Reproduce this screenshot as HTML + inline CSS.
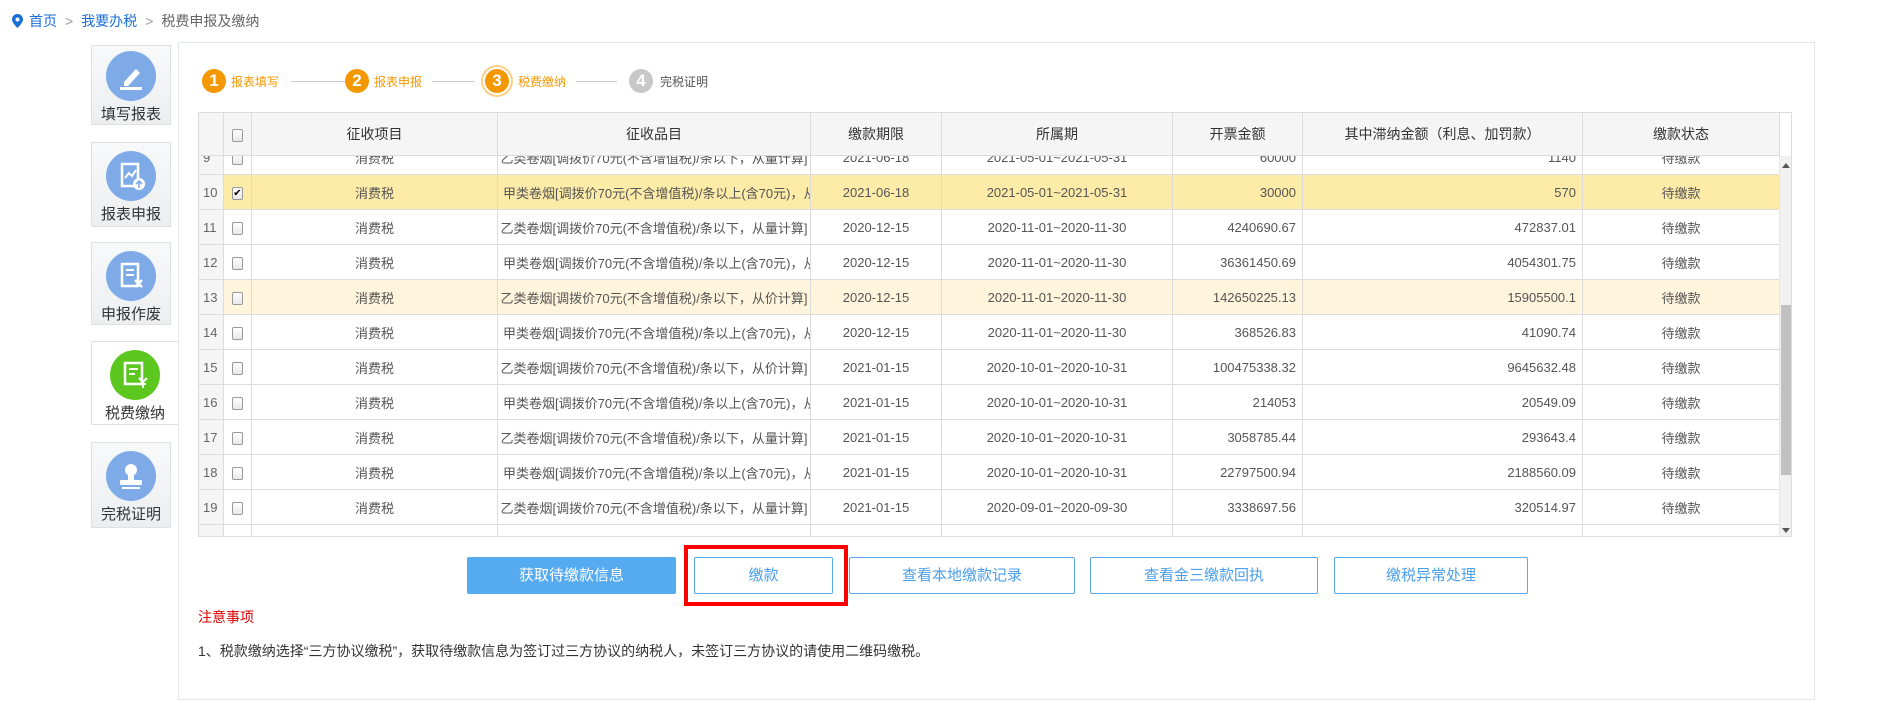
<!DOCTYPE html>
<html><head><meta charset="utf-8"><style>
*{margin:0;padding:0;box-sizing:border-box}
body{width:1904px;height:711px;background:#fff;font-family:"Liberation Sans","Noto Sans CJK SC",sans-serif;color:#333;position:relative;overflow:hidden;font-size:14px}
.abs{position:absolute}
.bc{left:12px;top:11px;font-size:14px;color:#666}
.bc a{color:#1a6fd8;text-decoration:none}
.bc span{color:#999;margin:0 8px}
.tile{position:absolute;left:91px;width:80px;background:linear-gradient(#f8f9fa,#eceef0);border:1px solid #dde1e5;text-align:center;font-size:15px;color:#333;line-height:20px}
.tile .c{width:50px;height:50px;border-radius:50%;background:#7eaae8;margin:8px auto 4px;position:relative}
.tile.act{background:#fff;width:87px;border-right:none}
.tile.act .c{background:#5cc81f}
.panel{left:178px;top:42px;width:1637px;height:658px;border:1px solid #e3e6ea}
.step{position:absolute;top:69px;width:24px;height:24px;border-radius:50%;background:#f39800;color:#fff;font-weight:bold;text-align:center;line-height:24px;font-size:17px}
.st{position:absolute;top:73px;font-size:12px;color:#f39800}
.ln{position:absolute;top:81px;height:1px;background:#ccc}
table{border-collapse:collapse;table-layout:fixed;font-size:13px}
td,th{border:1px solid #dcdcdc;text-align:center;white-space:nowrap;overflow:hidden;height:35px;color:#555;font-weight:normal}
th{background:#f5f5f5;height:43px;font-size:14px;color:#333}
td.r{text-align:right;padding-right:6px}
td.n{color:#666;text-align:left;padding-left:4px;background:#f5f5f5}
.cb{display:inline-block;width:11px;height:13px;border:1px solid #999;border-radius:2px;background:linear-gradient(#fff,#e8e8e8);vertical-align:middle;font-size:10px;line-height:11px;color:#000}
tr.y td{background:#fdeba8}
tr.y td.n{background:#f5f5f5}
tr.l td{background:#fff5dc}
tr.l td.n{background:#f5f5f5}
.btn{position:absolute;top:557px;height:37px;border:1px solid #5aa9ee;border-radius:2px;color:#4a9eea;text-align:center;line-height:35px;font-size:15px;background:#fff}
</style></head><body>
<div class="abs bc"><svg width="11" height="14" viewBox="0 0 11 14" style="vertical-align:-2px;margin-right:6px"><path d="M5.5 0C2.5 0 0 2.4 0 5.4 0 9 5.5 14 5.5 14S11 9 11 5.4C11 2.4 8.5 0 5.5 0zm0 7.5a2 2 0 110-4 2 2 0 010 4z" fill="#1a6fd8"/></svg><a>首页</a><span>&gt;</span><a>我要办税</a><span>&gt;</span>税费申报及缴纳</div>

<div class="tile" style="top:45px;height:80px"><div class="c" style="margin-top:5px"><svg width="50" height="50"><path d="M18 31l12-13 4 4-12 13h-4z" fill="#fff"/><rect x="14" y="36" width="22" height="3" fill="#fff"/></svg></div>填写报表</div>
<div class="tile" style="top:142px;height:85px"><div class="c"><svg width="50" height="50"><rect x="16" y="13" width="16" height="22" fill="none" stroke="#fff" stroke-width="2.5"/><path d="M19 27l4-5 3 3 4-6" stroke="#fff" stroke-width="2" fill="none"/><circle cx="33" cy="33" r="6" fill="#fff"/><path d="M33 37v-7m-3 3l3-3 3 3" stroke="#7eaae8" stroke-width="1.6" fill="none"/></svg></div>报表申报</div>
<div class="tile" style="top:242px;height:83px"><div class="c"><svg width="50" height="50"><rect x="16" y="13" width="16" height="22" fill="none" stroke="#fff" stroke-width="2.5"/><path d="M20 19h8M20 24h8" stroke="#fff" stroke-width="2"/><path d="M29 29l7 7m0-7l-7 7" stroke="#fff" stroke-width="2.5"/></svg></div>申报作废</div>
<div class="tile act" style="top:341px;height:84px"><div class="c"><svg width="50" height="50"><rect x="15" y="13" width="17" height="21" fill="none" stroke="#fff" stroke-width="2.5"/><path d="M19 19h9M19 24h6" stroke="#fff" stroke-width="2"/><path d="M29 28l4 4 4-4M33 32v6M30 34h6" stroke="#fff" stroke-width="2" fill="none"/></svg></div>税费缴纳</div>
<div class="tile" style="top:442px;height:86px"><div class="c"><svg width="50" height="50"><circle cx="25" cy="19" r="6" fill="#fff"/><rect x="22" y="23" width="6" height="6" fill="#fff"/><rect x="14" y="29" width="22" height="5" rx="1" fill="#fff"/><rect x="16" y="36" width="18" height="2" fill="#fff"/></svg></div>完税证明</div>

<div class="abs panel"></div>
<div class="step" style="left:202px">1</div><div class="st" style="left:231px">报表填写</div><div class="ln" style="left:291px;width:55px"></div>
<div class="step" style="left:345px">2</div><div class="st" style="left:374px">报表申报</div><div class="ln" style="left:432px;width:43px"></div>
<div class="step" style="left:485px;box-shadow:0 0 0 2px #fff,0 0 0 4px #fbd08a">3</div><div class="st" style="left:518px">税费缴纳</div><div class="ln" style="left:576px;width:41px"></div>
<div class="step" style="left:629px;background:#c8c8c8">4</div><div class="st" style="left:660px;color:#555">完税证明</div>

<div class="abs" style="left:198px;top:112px;width:1594px;height:425px;border:1px solid #dcdcdc;overflow:hidden">
<table style="width:1581px;position:absolute;top:-1px;left:-1px">
<colgroup><col style="width:25px"><col style="width:28px"><col style="width:246px"><col style="width:313px"><col style="width:131px"><col style="width:231px"><col style="width:130px"><col style="width:280px"><col style="width:197px"></colgroup>
<tr><th style="background:#f5f5f5"></th><th><span class="cb"></span></th><th>征收项目</th><th>征收品目</th><th>缴款期限</th><th>所属期</th><th>开票金额</th><th>其中滞纳金额（利息、加罚款）</th><th>缴款状态</th></tr>
</table>
<div style="position:absolute;top:43px;left:-1px;width:1581px;height:382px;overflow:hidden">
<table style="width:1581px;margin-top:-17px">
<colgroup><col style="width:25px"><col style="width:28px"><col style="width:246px"><col style="width:313px"><col style="width:131px"><col style="width:231px"><col style="width:130px"><col style="width:280px"><col style="width:197px"></colgroup>
<tr><td class="n">9</td><td><span class="cb"></span></td><td>消费税</td><td>乙类卷烟[调拨价70元(不含增值税)/条以下，从量计算]</td><td>2021-06-18</td><td>2021-05-01~2021-05-31</td><td class="r">60000</td><td class="r">1140</td><td>待缴款</td></tr>
<tr class="y"><td class="n">10</td><td><span class="cb">✔</span></td><td>消费税</td><td style="text-align:left;padding-left:5px">甲类卷烟[调拨价70元(不含增值税)/条以上(含70元)，从量</td><td>2021-06-18</td><td>2021-05-01~2021-05-31</td><td class="r">30000</td><td class="r">570</td><td>待缴款</td></tr>
<tr><td class="n">11</td><td><span class="cb"></span></td><td>消费税</td><td>乙类卷烟[调拨价70元(不含增值税)/条以下，从量计算]</td><td>2020-12-15</td><td>2020-11-01~2020-11-30</td><td class="r">4240690.67</td><td class="r">472837.01</td><td>待缴款</td></tr>
<tr><td class="n">12</td><td><span class="cb"></span></td><td>消费税</td><td style="text-align:left;padding-left:5px">甲类卷烟[调拨价70元(不含增值税)/条以上(含70元)，从价</td><td>2020-12-15</td><td>2020-11-01~2020-11-30</td><td class="r">36361450.69</td><td class="r">4054301.75</td><td>待缴款</td></tr>
<tr class="l"><td class="n">13</td><td><span class="cb"></span></td><td>消费税</td><td>乙类卷烟[调拨价70元(不含增值税)/条以下，从价计算]</td><td>2020-12-15</td><td>2020-11-01~2020-11-30</td><td class="r">142650225.13</td><td class="r">15905500.1</td><td>待缴款</td></tr>
<tr><td class="n">14</td><td><span class="cb"></span></td><td>消费税</td><td style="text-align:left;padding-left:5px">甲类卷烟[调拨价70元(不含增值税)/条以上(含70元)，从量</td><td>2020-12-15</td><td>2020-11-01~2020-11-30</td><td class="r">368526.83</td><td class="r">41090.74</td><td>待缴款</td></tr>
<tr><td class="n">15</td><td><span class="cb"></span></td><td>消费税</td><td>乙类卷烟[调拨价70元(不含增值税)/条以下，从价计算]</td><td>2021-01-15</td><td>2020-10-01~2020-10-31</td><td class="r">100475338.32</td><td class="r">9645632.48</td><td>待缴款</td></tr>
<tr><td class="n">16</td><td><span class="cb"></span></td><td>消费税</td><td style="text-align:left;padding-left:5px">甲类卷烟[调拨价70元(不含增值税)/条以上(含70元)，从量</td><td>2021-01-15</td><td>2020-10-01~2020-10-31</td><td class="r">214053</td><td class="r">20549.09</td><td>待缴款</td></tr>
<tr><td class="n">17</td><td><span class="cb"></span></td><td>消费税</td><td>乙类卷烟[调拨价70元(不含增值税)/条以下，从量计算]</td><td>2021-01-15</td><td>2020-10-01~2020-10-31</td><td class="r">3058785.44</td><td class="r">293643.4</td><td>待缴款</td></tr>
<tr><td class="n">18</td><td><span class="cb"></span></td><td>消费税</td><td style="text-align:left;padding-left:5px">甲类卷烟[调拨价70元(不含增值税)/条以上(含70元)，从价</td><td>2021-01-15</td><td>2020-10-01~2020-10-31</td><td class="r">22797500.94</td><td class="r">2188560.09</td><td>待缴款</td></tr>
<tr><td class="n">19</td><td><span class="cb"></span></td><td>消费税</td><td>乙类卷烟[调拨价70元(不含增值税)/条以下，从量计算]</td><td>2021-01-15</td><td>2020-09-01~2020-09-30</td><td class="r">3338697.56</td><td class="r">320514.97</td><td>待缴款</td></tr>
<tr><td class="n">20</td><td><span class="cb"></span></td><td></td><td></td><td></td><td></td><td></td><td></td><td></td></tr>
</table></div>
<div style="position:absolute;left:1580px;top:43px;width:13px;height:382px;background:#f1f1f1;border-left:1px solid #e5e5e5"></div>
<div style="position:absolute;left:1583px;top:50px;width:0;height:0;border:4px solid transparent;border-bottom:5px solid #555;border-top:none"></div>
<div style="position:absolute;left:1583px;top:415px;width:0;height:0;border:4px solid transparent;border-top:5px solid #555;border-bottom:none"></div>
<div style="position:absolute;left:1582px;top:192px;width:10px;height:170px;background:#c1c1c1"></div>
</div>

<div class="btn" style="left:467px;width:209px;background:#55aaf0;color:#fff;border-color:#55aaf0">获取待缴款信息</div>
<div class="btn" style="left:694px;width:139px">缴款</div>
<div class="abs" style="left:684px;top:545px;width:164px;height:61px;border:4px solid #f00"></div>
<div class="btn" style="left:849px;width:226px">查看本地缴款记录</div>
<div class="btn" style="left:1090px;width:228px">查看金三缴款回执</div>
<div class="btn" style="left:1334px;width:194px">缴税异常处理</div>
<div class="abs" style="left:198px;top:607px;color:#d00;font-size:14px">注意事项</div>
<div class="abs" style="left:198px;top:641px;color:#333;font-size:14px">1、税款缴纳选择“三方协议缴税”，获取待缴款信息为签订过三方协议的纳税人，未签订三方协议的请使用二维码缴税。</div>
</body></html>
